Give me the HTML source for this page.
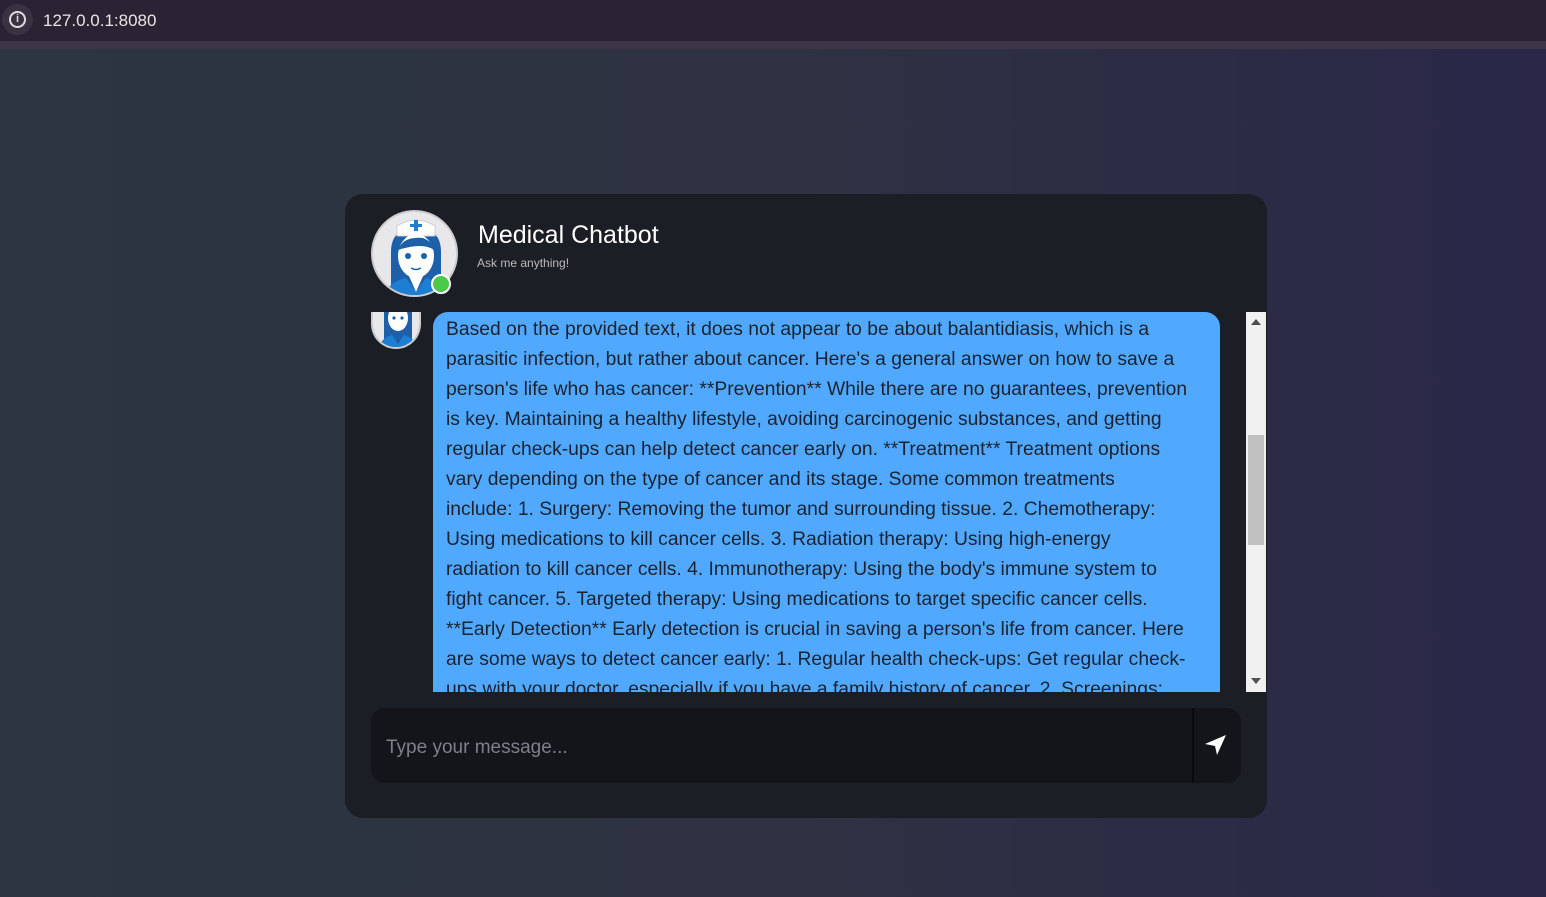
<!DOCTYPE html>
<html><head><meta charset="utf-8"><style>
*{box-sizing:border-box;margin:0;padding:0}
body{width:1546px;height:897px;overflow:hidden;font-family:"Liberation Sans",sans-serif;background:linear-gradient(90deg,#2c3540 0%,#2e3242 50%,#2a2748 100%);position:relative}
.bar{position:absolute;left:0;top:0;width:1546px;height:41px;background:#2b2334}
.bar2{position:absolute;left:0;top:41px;width:1546px;height:8px;background:#3e3547}
.info{position:absolute;left:2px;top:4px;width:31px;height:31px;border-radius:50%;background:#3a3242}
.info span{position:absolute;left:7px;top:7px;width:17px;height:17px;border:2px solid #ddd;border-radius:50%;color:#ddd;font-size:11px;font-weight:bold;text-align:center;line-height:13px}
.url{position:absolute;left:43px;top:11px;color:#e6e6e6;font-size:17px}
.card{position:absolute;left:345px;top:194px;width:922px;height:624px;background:#1c1e25;border-radius:18px}
.av{position:absolute;left:371px;top:210px;width:87px;height:87px;border-radius:50%;background:#e8e8ea;border:2px solid #ccc;overflow:hidden}
.dot{position:absolute;left:431px;top:274px;width:20px;height:20px;border-radius:50%;background:#4ac94a;border:2px solid #fff}
.title{position:absolute;left:478px;top:221px;color:#fff;font-size:25px}
.sub{position:absolute;left:477px;top:256px;color:#bbb;font-size:12px}
.scroll{position:absolute;left:365px;top:312px;width:901px;height:380px;overflow:hidden}
.sav{position:absolute;left:6px;top:-8px;width:50px;height:45px;border-radius:0 0 25px 25px;overflow:hidden;background:#e8e8ea;border:2px solid #ccc;border-top:none}
.bub{position:absolute;left:68px;top:0;width:787px;height:400px;background:#50a9ff;border-radius:15px 15px 0 0;padding:3px 0 0 13px;color:#1b2230;font-size:19.3px;line-height:30px;white-space:nowrap}
.sb{position:absolute;left:881px;top:0;width:20px;height:380px;background:#f1f1f1}
.th{position:absolute;left:2px;top:123px;width:16px;height:110px;background:#c1c1c1}
.input{position:absolute;left:371px;top:708px;width:870px;height:75px;background:#13151b;border-radius:14px}
.input .ph{position:absolute;left:15px;top:29px;color:#7d8088;font-size:19px}
.sep{position:absolute;left:821px;top:0;width:2px;height:75px;background:#0a0b0e}
</style></head><body>
<div class="bar"></div><div class="bar2"></div>
<div class="info"><span>i</span></div>
<div class="url">127.0.0.1:8080</div>
<div class="card"></div>
<div class="av"><svg width="87" height="87" viewBox="0 0 87 87"><path d="M18 87 L18 40 Q18 16 43 16 Q68 16 68 40 L68 87Z" fill="#1d5fa8"/><path d="M24 14 Q43 2 62 14 L62 24 L24 24Z" fill="#fff" stroke="#ccc"/><path d="M41 8h4v4h4v3h-4v4h-4v-4h-4v-3h4z" fill="#1d7ed3"/><ellipse cx="43" cy="44" rx="18" ry="22" fill="#fff"/><path d="M25 38 Q30 24 50 26 Q60 30 61 38 Q50 30 25 38Z" fill="#1d5fa8"/><circle cx="35" cy="44" r="3" fill="#1d5fa8"/><circle cx="51" cy="44" r="3" fill="#1d5fa8"/><path d="M38 56 Q43 59 48 56" stroke="#1d5fa8" fill="none" stroke-width="1.5"/><path d="M10 87 Q14 70 33 66 L43 80 L53 66 Q72 70 76 87Z" fill="#1d7ed3"/><path d="M36 64 L43 80 L50 64Z" fill="#fff"/></svg></div>
<div class="dot"></div>
<div class="title">Medical Chatbot</div>
<div class="sub">Ask me anything!</div>
<div class="scroll">
<div class="sav"><svg width="50" height="45" viewBox="0 0 50 45"><path d="M11 45 L11 8 Q11 -8 25 -8 Q39 -8 39 8 L39 45Z" fill="#1d5fa8"/><ellipse cx="25" cy="14" rx="10" ry="13" fill="#fff"/><circle cx="21" cy="14" r="1.6" fill="#1d5fa8"/><circle cx="29" cy="14" r="1.6" fill="#1d5fa8"/><path d="M5 45 Q8 34 19 31 L25 40 L31 31 Q42 34 45 45Z" fill="#1d7ed3"/></svg></div>
<div class="bub">Based on the provided text, it does not appear to be about balantidiasis, which is a<br>parasitic infection, but rather about cancer. Here's a general answer on how to save a<br>person's life who has cancer: **Prevention** While there are no guarantees, prevention<br>is key. Maintaining a healthy lifestyle, avoiding carcinogenic substances, and getting<br>regular check-ups can help detect cancer early on. **Treatment** Treatment options<br>vary depending on the type of cancer and its stage. Some common treatments<br>include: 1. Surgery: Removing the tumor and surrounding tissue. 2. Chemotherapy:<br>Using medications to kill cancer cells. 3. Radiation therapy: Using high-energy<br>radiation to kill cancer cells. 4. Immunotherapy: Using the body's immune system to<br>fight cancer. 5. Targeted therapy: Using medications to target specific cancer cells.<br>**Early Detection** Early detection is crucial in saving a person's life from cancer. Here<br>are some ways to detect cancer early: 1. Regular health check-ups: Get regular check-<br>ups with your doctor, especially if you have a family history of cancer. 2. Screenings:</div>
<div class="sb"><svg style="position:absolute;left:5px;top:7px" width="10" height="6"><path d="M0 6L5 0L10 6Z" fill="#505050"/></svg><div class="th"></div><svg style="position:absolute;left:5px;top:366px" width="10" height="6"><path d="M0 0L5 6L10 0Z" fill="#505050"/></svg></div>
</div>
<div class="input"><div class="ph">Type your message...</div><div class="sep"></div>
<svg style="position:absolute;left:833px;top:26px" width="24" height="22" viewBox="0 0 24 22"><path d="M1 10 L22 1 L13 21 L11 12Z" fill="#fff"/></svg></div>
</body></html>
